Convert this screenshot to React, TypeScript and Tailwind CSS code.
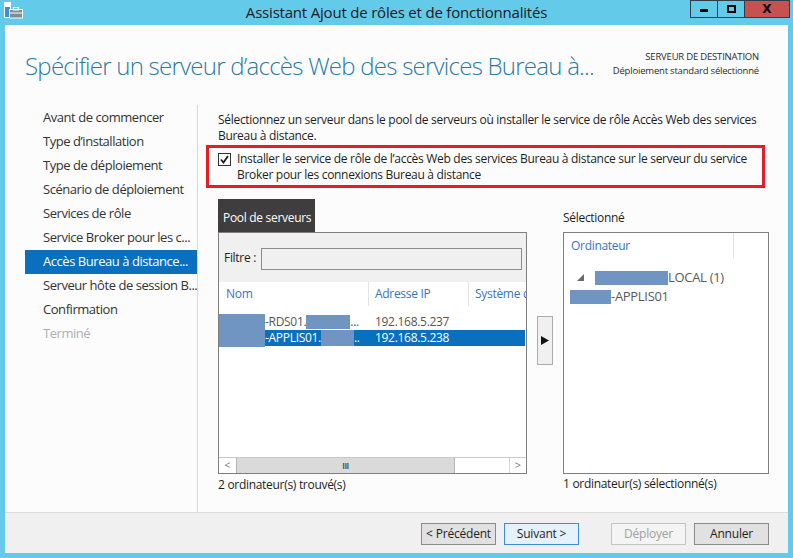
import React from 'react';

const navItems = [
  'Avant de commencer',
  'Type d’installation',
  'Type de déploiement',
  'Scénario de déploiement',
  'Services de rôle',
  'Service Broker pour les c...',
  'Accès Bureau à distance...',
  'Serveur hôte de session B...',
  'Confirmation',
  'Terminé',
];

function TitleBar() {
  return (
    <div className="relative h-[25px] flex items-center justify-center shrink-0">
      <svg className="absolute left-[4px] top-[2px]" width="20" height="17" viewBox="0 0 20 17">
        <rect x="0.5" y="0.5" width="6" height="15" fill="#3b8fd0" stroke="#ffffff" />
        <rect x="1" y="1" width="5" height="4" fill="#ffffff" />
        <rect x="5.5" y="7.5" width="13" height="8.5" fill="#7b8c9c" stroke="#ffffff" />
        <rect x="9.5" y="5.5" width="5" height="2.5" fill="none" stroke="#ffffff" />
        <line x1="6" y1="11" x2="18" y2="11" stroke="#ffffff" strokeWidth="1" />
      </svg>
      <span className="text-[15px] text-[#1b1b1b] tracking-[-0.2px]">Assistant Ajout de rôles et de fonctionnalités</span>
      <div className="absolute right-[3px] top-0 flex h-[18px]">
        <div className="w-[28px] h-full border border-[#2d3e48] flex items-end justify-center pb-[5px]">
          <div className="w-[8px] h-[3px] bg-black" />
        </div>
        <div className="w-[27px] h-full border-y border-r border-[#2d3e48] flex items-center justify-center">
          <div className="w-[9px] h-[8px] border-2 border-black" />
        </div>
        <div className="w-[45px] h-full border-y border-r border-[#2d3e48] bg-[#c75050] flex items-center justify-center">
          <span className="text-[12px] font-bold text-black leading-none font-['DejaVu_Sans',sans-serif]">X</span>
        </div>
      </div>
    </div>
  );
}

function Redact({ w, h = 'h-[16px]' }: { w: string; h?: string }) {
  return <span className={`inline-block shrink-0 bg-[#7095c3] ${w} ${h}`} />;
}

function PoolPanel() {
  return (
    <div className="w-[309px] flex flex-col">
      <div className="h-[33px] w-[97px] bg-[#3f3d3d] text-white text-[12px] tracking-[-0.3px] whitespace-nowrap flex items-center pl-[5px] pt-[4px]">
        Pool de serveurs
      </div>
      <div className="h-[242px] border border-[#7f7f7f] flex flex-col">
        <div className="h-[49px] bg-[#f0f0f0] flex items-center pl-[5px]">
          <span className="w-[37px] text-[12px] tracking-[-0.3px] text-[#1e1e1e]">Filtre :</span>
          <div className="w-[261px] h-[22px] border border-[#8c8c8c] bg-[#f0f0f0] mt-[3px]" />
        </div>
        <div className="h-[24px] bg-white flex text-[12px] tracking-[-0.3px] text-[#3d72b8] items-stretch">
          <div className="w-[149px] pl-[7px] flex items-center">Nom</div>
          <div className="w-[100px] pl-[6px] flex items-center border-l border-[#e3e3e3]">Adresse IP</div>
          <div className="flex-1 pl-[6px] flex items-center border-l border-[#e3e3e3] overflow-hidden whitespace-nowrap">Système d’exploitation</div>
        </div>
        <div className="flex-1 bg-white pt-[8px] text-[12px] tracking-[-0.3px] leading-[16px]">
          <div className="flex h-[16px] text-[#555555]">
            <Redact w="w-[46px]" h="h-[17px]" />
            <div className="w-[103px] flex items-center whitespace-nowrap overflow-hidden">
              <span>-RDS01.</span>
              <Redact w="w-[44px]" h="h-[14px]" />
              <span>...</span>
            </div>
            <div className="pl-[7px] whitespace-nowrap">192.168.5.237</div>
          </div>
          <div className="flex h-[16px] text-white">
            <Redact w="w-[46px]" h="h-[17px]" />
            <div className="flex-1 flex bg-[#0a6fbd] mr-[1px]">
              <div className="w-[103px] flex items-center whitespace-nowrap overflow-hidden">
                <span>-APPLIS01.</span>
                <Redact w="w-[33px]" h="h-[16px]" />
                <span>..</span>
              </div>
              <div className="pl-[7px] whitespace-nowrap">192.168.5.238</div>
            </div>
          </div>
        </div>
        <div className="h-[16px] border-t border-[#c8c8c8] flex bg-white">
          <div className="w-[17px] flex items-center justify-center text-[#7a7a7a] text-[11px]">&lt;</div>
          <div className="w-[219px] bg-[#dadada] border-x border-[#b4b4b4] flex items-center justify-center">
            <span className="text-[8px] font-bold text-[#555555] tracking-[-0.5px] leading-none">III</span>
          </div>
          <div className="flex-1 border-r border-[#d6d6d6]" />
          <div className="w-[16px] flex items-center justify-center text-[#7a7a7a] text-[11px]">&gt;</div>
        </div>
      </div>
      <div className="mt-[3px] text-[12px] tracking-[-0.3px] leading-[16px] text-[#1e1e1e]">2 ordinateur(s) trouvé(s)</div>
    </div>
  );
}

function SelectedPanel() {
  return (
    <div className="w-[206px] flex flex-col">
      <div className="h-[33px] pt-[11px] text-[12px] tracking-[-0.3px] leading-[16px] text-[#1e1e1e]">Sélectionné</div>
      <div className="h-[242px] border border-[#7f7f7f] bg-white flex flex-col">
        <div className="h-[25px] flex">
          <div className="w-[170px] pl-[7px] flex items-center text-[12px] tracking-[-0.3px] text-[#3d72b8] border-r border-[#e3e3e3]">Ordinateur</div>
        </div>
        <div className="pt-[10px] text-[13px] tracking-[-0.3px] text-[#5a5a5a] leading-[19px]">
          <div className="flex items-center h-[19px] pl-[13px]">
            <svg width="7" height="7" viewBox="0 0 7 7" className="mr-[11px]">
              <polygon points="7,0 7,7 0,7" fill="#6b6b6b" />
            </svg>
            <Redact w="w-[73px]" h="h-[14px]" />
            <span>LOCAL (1)</span>
          </div>
          <div className="flex items-center h-[19px] pl-[6px]">
            <Redact w="w-[41px]" h="h-[14px]" />
            <span>-APPLIS01</span>
          </div>
        </div>
      </div>
      <div className="mt-[2px] text-[12px] tracking-[-0.3px] leading-[16px] text-[#1e1e1e] whitespace-nowrap">1 ordinateur(s) sélectionné(s)</div>
    </div>
  );
}

function Btn({ label, kind }: { label: string; kind?: 'primary' | 'disabled' }) {
  const cls =
    kind === 'primary'
      ? 'bg-[#e5f1fb] border-[#3c8de0] text-[#1e1e1e]'
      : kind === 'disabled'
      ? 'bg-[#f4f4f4] border-[#c4c4c4] text-[#a0a0a0]'
      : 'bg-[#e1e1e1] border-[#8a8a8a] text-[#1e1e1e]';
  return (
    <div className={`w-[75px] h-[22px] border flex items-center justify-center text-[12px] tracking-[-0.2px] ${cls}`}>{label}</div>
  );
}

export default function App() {
  return (
    <div className="w-[793px] h-[558px] bg-[#64cae9] flex flex-col overflow-hidden font-['Open_Sans',sans-serif]">
      <TitleBar />
      <div className="flex-1 mx-[5px] mb-[5px] bg-[#fcfcfc] flex flex-col">
        <div className="h-[80px] flex justify-between pl-[20px] pr-[29px] shrink-0">
          <div className="pt-[24px] text-[24px] leading-[34px] font-light text-[#2a7aa6] tracking-[-0.75px] whitespace-nowrap">
            Spécifier un serveur d’accès Web des services Bureau à...
          </div>
          <div className="pt-[25px] text-right text-[9.5px] leading-[14px] text-[#2b2b2b] tracking-[-0.2px] whitespace-nowrap">
            <div>SERVEUR DE DESTINATION</div>
            <div>Déploiement standard sélectionné</div>
          </div>
        </div>
        <div className="flex-1 flex">
          <div className="w-[193px] border-r border-[#d9d9d9] pl-[20px] pt-[1px] shrink-0">
            {navItems.map((item, i) => (
              <div
                key={item}
                className={`h-[24px] pl-[18px] flex items-center text-[13px] tracking-[-0.45px] whitespace-nowrap ${
                  i === 6 ? 'bg-[#0a6fbd] text-white' : i === 9 ? 'text-[#b0b0b0]' : 'text-[#333333]'
                }`}
              >
                {item}
              </div>
            ))}
          </div>
          <div className="flex-1 pl-[20px] pt-[7px]">
            <div className="text-[12px] tracking-[-0.3px] leading-[16px] text-[#1e1e1e] whitespace-nowrap">
              Sélectionnez un serveur dans le pool de serveurs où installer le service de rôle Accès Web des services
              <br />
              Bureau à distance.
            </div>
            <div className="ml-[-12px] mt-[1px] w-[559px] h-[43px] border-[3px] border-[#e81c24] flex items-start pl-[9px] pt-[3px]">
              <svg width="13" height="13" viewBox="0 0 13 13" className="mt-[2px] shrink-0">
                <rect x="0.5" y="0.5" width="12" height="12" fill="#ffffff" stroke="#333333" />
                <path d="M3 6.5 L5.5 9.5 L10 3" fill="none" stroke="#1a1a1a" strokeWidth="1.8" />
              </svg>
              <div className="ml-[6px] text-[12px] tracking-[-0.3px] leading-[16px] text-[#1e1e1e] whitespace-nowrap">
                Installer le service de rôle de l’accès Web des services Bureau à distance sur le serveur du service
                <br />
                Broker pour les connexions Bureau à distance
              </div>
            </div>
            <div className="mt-[11px] flex">
              <PoolPanel />
              <div className="w-[36px] pt-[117px] pl-[10px]">
                <div className="w-[16px] h-[49px] bg-[#f0f0f0] border border-[#acacac] flex items-center justify-center">
                  <svg width="8" height="9" viewBox="0 0 8 9">
                    <polygon points="0,0 8,4.5 0,9" fill="#111111" />
                  </svg>
                </div>
              </div>
              <SelectedPanel />
            </div>
          </div>
        </div>
        <div className="h-[41px] border-t border-[#dcdcdc] bg-[#f0f0f0] flex items-start justify-end pr-[19px] pt-[10px] shrink-0">
          <Btn label="< Précédent" />
          <div className="w-[8px]" />
          <Btn label="Suivant >" kind="primary" />
          <div className="w-[32px]" />
          <Btn label="Déployer" kind="disabled" />
          <div className="w-[8px]" />
          <Btn label="Annuler" />
        </div>
      </div>
    </div>
  );
}
